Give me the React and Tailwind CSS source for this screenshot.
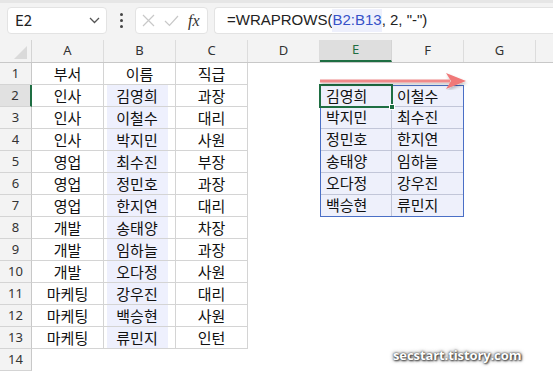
import React from 'react';

const cols = ['A', 'B', 'C', 'D', 'E', 'F', 'G', ''];
const data = [
  ['부서', '이름', '직급'],
  ['인사', '김영희', '과장'],
  ['인사', '이철수', '대리'],
  ['인사', '박지민', '사원'],
  ['영업', '최수진', '부장'],
  ['영업', '정민호', '과장'],
  ['영업', '한지연', '대리'],
  ['개발', '송태양', '차장'],
  ['개발', '임하늘', '과장'],
  ['개발', '오다정', '사원'],
  ['마케팅', '강우진', '대리'],
  ['마케팅', '백승현', '사원'],
  ['마케팅', '류민지', '인턴'],
];
const spill = [
  ['김영희', '이철수'],
  ['박지민', '최수진'],
  ['정민호', '한지연'],
  ['송태양', '임하늘'],
  ['오다정', '강우진'],
  ['백승현', '류민지'],
];

const font = { fontFamily: '"Noto Sans CJK KR", "Noto Sans", sans-serif' };

function Toolbar() {
  return (
    <div className="h-[40px] bg-[#f3f3f3] border-t-[3px] border-[#e6e6e6] flex items-start pt-[4px] pl-[7px] gap-[6px]">
      <div className="w-[100px] h-[27px] bg-white rounded-[4px] border border-[#e3e3e3] flex items-center justify-between pl-[7px] pr-[6px] text-[15px] text-[#222]">
        <span>E2</span>
        <svg width="11" height="7" viewBox="0 0 11 7"><path d="M1 1l4.5 4.5L10 1" stroke="#555" strokeWidth="1.3" fill="none" /></svg>
      </div>
      <div className="w-[16px] h-[27px] flex flex-col items-center justify-center gap-[3px]">
        <div className="w-[3px] h-[3px] rounded-full bg-[#444]" />
        <div className="w-[3px] h-[3px] rounded-full bg-[#444]" />
        <div className="w-[3px] h-[3px] rounded-full bg-[#444]" />
      </div>
      <div className="w-[73px] h-[27px] bg-white rounded-[4px] border border-[#e3e3e3] flex items-center pl-[6px] gap-[9px]">
        <svg width="13" height="13" viewBox="0 0 13 13"><path d="M1 1l11 11M12 1L1 12" stroke="#c8c8c8" strokeWidth="1.2" /></svg>
        <svg width="15" height="12" viewBox="0 0 15 12"><path d="M1 6l4.5 4.5L14 1" stroke="#c8c8c8" strokeWidth="1.2" fill="none" /></svg>
        <span className="text-[16px] italic text-[#333] leading-none" style={{ fontFamily: '"Liberation Serif", serif' }}>fx</span>
      </div>
      <div className="flex-1 h-[27px] bg-white rounded-l-[4px] border border-r-0 border-[#e3e3e3] flex items-center pl-[12px] text-[15px] text-[#222] whitespace-nowrap" style={{ fontFamily: '"Liberation Sans", sans-serif' }}>
        <span>=WRAPROWS(</span>
        <span className="text-[#3652c8] bg-[#eef0fc]">B2:B13</span>
        <span>, 2, "-")</span>
      </div>
    </div>
  );
}

function HeaderRow() {
  return (
    <div className="flex h-[23px] bg-[#f3f3f3] border-b border-[#c8c8c8]">
      <div className="w-[32px] shrink-0 relative border-r border-[#d4d4d4]">
        <div className="absolute right-[4px] bottom-[3px] w-0 h-0 border-l-[13px] border-l-transparent border-b-[13px] border-b-[#dadada]" />
      </div>
      {cols.map((c, i) => (
        <div
          key={i}
          className={`w-[72px] shrink-0 flex items-center justify-center text-[13px] border-r ${c === 'E' ? 'bg-[#dedede] text-[#1e6e42] border-b-2 border-b-[#1e6e42] border-[#d4d4d4]' : 'text-[#333] border-[#dcdcdc]'}`}
          style={{ fontFamily: '"Noto Sans", sans-serif' }}
        >
          {c}
        </div>
      ))}
    </div>
  );
}

function Row({ r }) {
  const row = data[r - 1];
  const spillRow = r >= 2 && r <= 7 ? spill[r - 2] : null;
  return (
    <div className="flex h-[22px]">
      <div
        className={`w-[32px] shrink-0 flex items-center justify-center text-[13px] text-[#333] border-b border-[#d4d4d4] ${r === 2 ? 'bg-[#e1e1e1] border-r-2 border-r-[#1e6e42]' : 'bg-[#f3f3f3] border-r border-r-[#c8c8c8]'}`}
        style={{ fontFamily: '"Noto Sans", sans-serif' }}
      >
        {r}
      </div>
      {row ? (
        row.map((v, i) => (
          <div key={i} className="w-[72px] shrink-0 border-r border-b border-[#d4d4d4] flex justify-center text-[15px] text-[#111] leading-[21px]">
            {i === 1 && r > 1 ? <div className="w-[61px] ml-[-5px] text-center bg-[#eef0fd]">{v}</div> : v}
          </div>
        ))
      ) : (
        <div className="w-[216px] shrink-0" />
      )}
      <div className="w-[72px] shrink-0" />
      {spillRow ? (
        <div className={`flex bg-[#eef0fb] border-l border-r border-[#4a6fc6] ${r === 7 ? 'border-b' : ''} ${r === 2 ? 'border-t' : ''}`}>
          {spillRow.map((v, i) => (
            <div
              key={i}
              className={`w-[71px] shrink-0 pl-[5px] text-[15px] text-[#111] leading-[20px] ${i === 0 ? 'border-r border-r-[#c2c6d8]' : ''} ${r < 7 ? 'border-b border-b-[#c2c6d8]' : ''}`}
            >
              {v}
            </div>
          ))}
        </div>
      ) : null}
    </div>
  );
}

export default function App() {
  return (
    <div className="w-[553px] h-[376px] bg-white overflow-hidden relative" style={font}>
      <Toolbar />
      <HeaderRow />
      {Array.from({ length: 14 }, (_, i) => (
        <Row key={i} r={i + 1} />
      ))}

      {/* active cell E2 */}
      <div className="absolute left-[319px] top-[84px] w-[74px] h-[24px] border-2 border-[#1e6e42] pointer-events-none">
        <div className="absolute right-[-4px] bottom-[-4px] w-[6px] h-[6px] bg-[#1e6e42] border border-white" />
      </div>

      {/* spill arrow */}
      <svg className="absolute left-[318px] top-[72px]" width="152" height="18" viewBox="0 0 152 18">
        <defs>
          <filter id="sh" x="-10%" y="-50%" width="120%" height="200%">
            <feDropShadow dx="1" dy="2" stdDeviation="1.5" floodColor="#000" floodOpacity="0.25" />
          </filter>
        </defs>
        <g filter="url(#sh)">
          <rect x="2" y="7.5" width="130" height="3" fill="#f08a8a" />
          <path d="M128 1 L148 9 L128 17 L133 9 Z" fill="#f07878" />
        </g>
      </svg>

      {/* watermark */}
      <div
        className="absolute left-[393px] top-[346px] text-[13px] font-bold text-white tracking-[-0.1px]"
        style={{ fontFamily: '"Open Sans", sans-serif', textShadow: '0 0 2px #333, 1px 1px 2px #444, 0 0 4px #666' }}
      >
        secstart.tistory.com
      </div>
    </div>
  );
}
